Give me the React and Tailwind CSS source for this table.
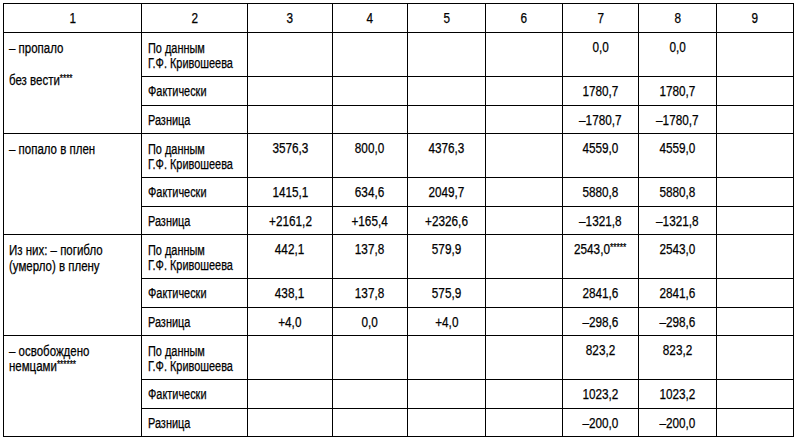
import React from "react";

function L({ children }) {
  return <span className="inline-block whitespace-nowrap scale-x-[0.82] origin-left">{children}</span>;
}
function K({ children }) {
  return <span className="inline-block whitespace-nowrap scale-x-[0.78] origin-left">{children}</span>;
}
function C({ children }) {
  return <span className="inline-block whitespace-nowrap scale-x-[0.84] origin-center">{children}</span>;
}
function Star({ s }) {
  return <span className="align-top text-[10px] leading-none relative top-[1px]">{s}</span>;
}

const groups = [
  {
    label: (
      <>
        <div><L>– пропало</L></div>
        <div className="mt-[17px]">
          <L>без вести<Star s="****" /></L>
        </div>
      </>
    ),
    rows: [
      ["", "", "", "", "0,0", "0,0", ""],
      ["", "", "", "", "1780,7", "1780,7", ""],
      ["", "", "", "", "–1780,7", "–1780,7", ""],
    ],
  },
  {
    label: <div><L>– попало в плен</L></div>,
    rows: [
      ["3576,3", "800,0", "4376,3", "", "4559,0", "4559,0", ""],
      ["1415,1", "634,6", "2049,7", "", "5880,8", "5880,8", ""],
      ["+2161,2", "+165,4", "+2326,6", "", "–1321,8", "–1321,8", ""],
    ],
  },
  {
    label: (
      <>
        <div><L>Из них: – погибло</L></div>
        <div className="mt-[1px]"><L>(умерло) в плену</L></div>
      </>
    ),
    rows: [
      ["442,1", "137,8", "579,9", "", "2543,0*****", "2543,0", ""],
      ["438,1", "137,8", "575,9", "", "2841,6", "2841,6", ""],
      ["+4,0", "0,0", "+4,0", "", "–298,6", "–298,6", ""],
    ],
  },
  {
    label: (
      <>
        <div><L>– освобождено</L></div>
        <div>
          <L>немцами<Star s="******" /></L>
        </div>
      </>
    ),
    rows: [
      ["", "", "", "", "823,2", "823,2", ""],
      ["", "", "", "", "1023,2", "1023,2", ""],
      ["", "", "", "", "–200,0", "–200,0", ""],
    ],
  },
];

const kinds = [
  (
    <>
      <div><K>По данным</K></div>
      <div><K>Г.Ф. Кривошеева</K></div>
    </>
  ),
  <div><K>Фактически</K></div>,
  <div><K>Разница</K></div>,
];

const rowH = ["h-[44px]", "h-[29px]", "h-[28px]"];

function Num({ v }) {
  if (!v) return null;
  if (v.includes("*")) {
    const i = v.indexOf("*");
    return (
      <C>
        {v.slice(0, i)}
        <Star s={v.slice(i)} />
      </C>
    );
  }
  return <C>{v}</C>;
}

export default function App() {
  return (
    <div
      className="w-[795px] h-[440px] overflow-hidden bg-white pt-[3px] pl-[3px] text-black [-webkit-text-stroke:0.25px_black]"
      style={{ fontFamily: '"Liberation Sans", Arial, sans-serif' }}
    >
      <table className="table-fixed border-collapse text-[14px] leading-[15px] w-[790px]">
        <colgroup>
          <col className="w-[138px]" />
          <col className="w-[106px]" />
          <col className="w-[85px]" />
          <col className="w-[75px]" />
          <col className="w-[78px]" />
          <col className="w-[77px]" />
          <col className="w-[76px]" />
          <col className="w-[78px]" />
          <col className="w-[77px]" />
        </colgroup>
        <tbody>
          <tr className="h-[29px]">
            {[1, 2, 3, 4, 5, 6, 7, 8, 9].map((n) => (
              <td key={n} className="border border-black text-center align-middle p-0">
                <C>{n}</C>
              </td>
            ))}
          </tr>
          {groups.map((g, gi) =>
            g.rows.map((r, ri) => (
              <tr key={gi + "-" + ri} className={rowH[ri]}>
                {ri === 0 && (
                  <td rowSpan={3} className="border border-black align-top pl-[5px] pr-1 pt-[8px] pb-0">
                    {g.label}
                  </td>
                )}
                <td className={"border border-black align-top pl-[6px] pr-1 pb-0 " + (ri === 0 ? "pt-[8px]" : "pt-[7px]")}>{kinds[ri]}</td>
                {r.map((v, ci) => (
                  <td key={ci} className="border border-black align-top text-center pt-[7px] pb-0 px-0">
                    <Num v={v} />
                  </td>
                ))}
              </tr>
            ))
          )}
        </tbody>
      </table>
    </div>
  );
}
